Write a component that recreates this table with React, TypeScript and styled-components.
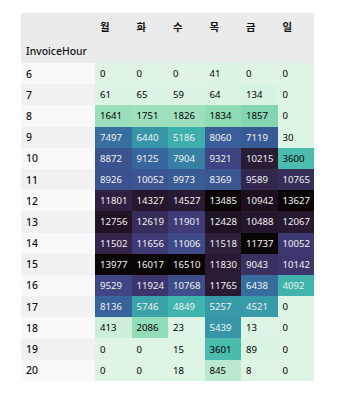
import React from 'react';
import styled, { createGlobalStyle } from 'styled-components';

const GlobalStyle = createGlobalStyle`
  html, body {
    margin: 0;
    padding: 0;
    background: #ffffff;
  }
  body {
    font-family: "Noto Sans", "Noto Sans CJK KR", sans-serif;
  }
`;

const days = ['월', '화', '수', '목', '금', '일'];

const rows: [number, number[]][] = [
  [6, [0, 0, 0, 41, 0, 0]],
  [7, [61, 65, 59, 64, 134, 0]],
  [8, [1641, 1751, 1826, 1834, 1857, 0]],
  [9, [7497, 6440, 5186, 8060, 7119, 30]],
  [10, [8872, 9125, 7904, 9321, 10215, 3600]],
  [11, [8926, 10052, 9973, 8369, 9589, 10765]],
  [12, [11801, 14327, 14527, 13485, 10942, 13627]],
  [13, [12756, 12619, 11901, 12428, 10488, 12067]],
  [14, [11502, 11656, 11006, 11518, 11737, 10052]],
  [15, [13977, 16017, 16510, 11830, 9043, 10142]],
  [16, [9529, 11924, 10768, 11765, 6438, 4092]],
  [17, [8136, 5746, 4849, 5257, 4521, 0]],
  [18, [413, 2086, 23, 5439, 13, 0]],
  [19, [0, 0, 15, 3601, 89, 0]],
  [20, [0, 0, 18, 845, 8, 0]],
];

// mako colormap stops (dark -> light)
const mako: [number, [number, number, number]][] = [
  [0, [0x0b, 0x04, 0x05]],
  [1 / 7, [0x2e, 0x1e, 0x3b]],
  [2 / 7, [0x41, 0x3d, 0x7b]],
  [3 / 7, [0x37, 0x65, 0x9e]],
  [4 / 7, [0x34, 0x8f, 0xa7]],
  [5 / 7, [0x40, 0xb7, 0xad]],
  [6 / 7, [0x8b, 0xda, 0xb2]],
  [1, [0xde, 0xf5, 0xe5]],
];

const makoAt = (t: number): [number, number, number] => {
  for (let i = 1; i < mako.length; i++) {
    const [t1, c1] = mako[i];
    const [t0, c0] = mako[i - 1];
    if (t <= t1) {
      const f = (t - t0) / (t1 - t0);
      return [0, 1, 2].map((k) => Math.round(c0[k] + (c1[k] - c0[k]) * f)) as [number, number, number];
    }
  }
  return mako[mako.length - 1][1];
};

const luminance = (rgb: [number, number, number]) => {
  const lin = rgb.map((v) => {
    const c = v / 255;
    return c <= 0.03928 ? c / 12.92 : Math.pow((c + 0.055) / 1.055, 2.4);
  });
  return 0.2126 * lin[0] + 0.7152 * lin[1] + 0.0722 * lin[2];
};

// mako_r, normalised per column like background_gradient(axis=0)
const colMax = days.map((_, i) => Math.max(...rows.map(([, v]) => v[i])));
const cellColors = (value: number, col: number) => {
  const rgb = makoAt(1 - value / colMax[col]);
  return {
    bg: `rgb(${rgb[0]}, ${rgb[1]}, ${rgb[2]})`,
    fg: luminance(rgb) < 0.39 ? '#f1f1f1' : '#000000',
  };
};

const Wrapper = styled.div`
  padding: 13px 0 0 21px;
`;

const Table = styled.table`
  border-collapse: collapse;
  border-spacing: 0;
  table-layout: fixed;
  width: 293px;
  font-size: 9.6px;
  color: #000;
`;

const Head = styled.thead`
  background: #ebebeb;
`;

const HeadCell = styled.th<{ $tall?: boolean }>`
  height: ${(p) => (p.$tall ? '26px' : '24px')};
  padding: 0 5px;
  text-align: left;
  vertical-align: middle;
  font-size: 10.4px;
  font-weight: ${(p) => (p.$tall ? 700 : 500)};
  color: #111;
  white-space: nowrap;
`;

const Row = styled.tr`
  height: 21.2px;
  &:nth-child(odd) th {
    background: #f9f9f9;
  }
  &:nth-child(even) th {
    background: #f1f1f1;
  }
`;

const IndexCell = styled.th`
  padding: 0 5px;
  text-align: left;
  font-size: 10.4px;
  font-weight: 500;
  color: #111;
`;

const DataCell = styled.td<{ $bg: string; $fg: string }>`
  padding: 0 5px;
  text-align: left;
  white-space: nowrap;
  background: ${(p) => p.$bg};
  color: ${(p) => p.$fg};
`;

export default function App() {
  return (
    <Wrapper>
      <GlobalStyle />
      <Table>
        <colgroup>
          <col style={{ width: 74 }} />
          {days.map((d) => (
            <col key={d} style={{ width: 36.5 }} />
          ))}
        </colgroup>
        <Head>
          <tr>
            <HeadCell $tall />
            {days.map((d) => (
              <HeadCell key={d} $tall>
                {d}
              </HeadCell>
            ))}
          </tr>
          <tr>
            <HeadCell>InvoiceHour</HeadCell>
            {days.map((d) => (
              <HeadCell key={d} />
            ))}
          </tr>
        </Head>
        <tbody>
          {rows.map(([hour, values]) => (
            <Row key={hour}>
              <IndexCell>{hour}</IndexCell>
              {values.map((v, i) => {
                const c = cellColors(v, i);
                return (
                  <DataCell key={i} $bg={c.bg} $fg={c.fg}>
                    {v}
                  </DataCell>
                );
              })}
            </Row>
          ))}
        </tbody>
      </Table>
    </Wrapper>
  );
}
